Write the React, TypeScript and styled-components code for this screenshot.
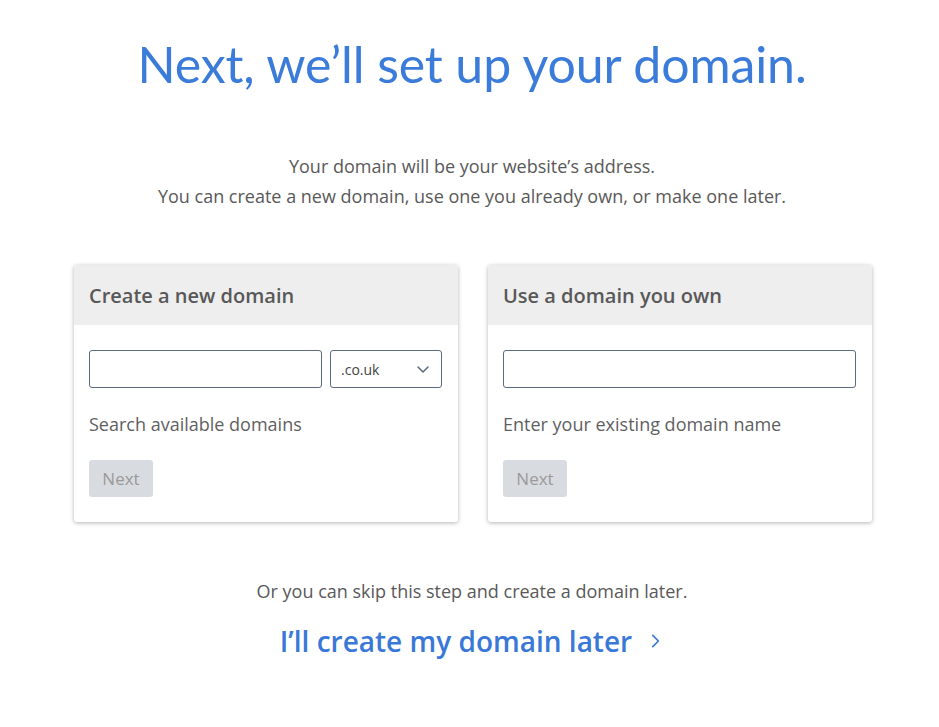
import React from "react"
import styled, { createGlobalStyle } from "styled-components"

const GlobalStyle = createGlobalStyle`
  html, body {
    margin: 0;
    padding: 0;
    background: #ffffff;
  }
  body {
    font-family: "Open Sans", "Liberation Sans", sans-serif;
    color: #555;
  }
`

const Page = styled.main`
  display: flex;
  flex-direction: column;
  align-items: center;
  padding: 34px 0 0 5px;
`

const Title = styled.h1`
  margin: 0;
  font-family: Lato, "Open Sans", sans-serif;
  font-weight: 400;
  font-size: 50px;
  line-height: 60px;
  color: #3b7bd9;
  letter-spacing: -0.1px;
`

const Intro = styled.p`
  margin: 57px 0 0;
  font-size: 18px;
  line-height: 30px;
  text-align: center;
  color: #595959;
`

const Cards = styled.div`
  display: grid;
  grid-template-columns: 384px 384px;
  gap: 30px;
  margin: 54px 0 0 2px;
`

const Card = styled.section`
  background: #fff;
  border-radius: 3px;
  box-shadow: 0 1px 4px rgba(0, 0, 0, 0.3);
  overflow: hidden;
`

const CardHeader = styled.h2`
  margin: 0;
  height: 60px;
  display: flex;
  align-items: center;
  padding: 0 15px;
  background: #eeeeee;
  font-size: 20px;
  font-weight: 600;
  color: #585858;
`

const CardBody = styled.div`
  padding: 25px 16px 25px 15px;
`

const InputRow = styled.div`
  display: flex;
  gap: 8px;
`

const TextInput = styled.input`
  flex: 1;
  min-width: 0;
  height: 38px;
  box-sizing: border-box;
  border: 1px solid #5d6b80;
  border-radius: 3px;
  padding: 0 10px;
  font: inherit;
  font-size: 15px;
`

const Select = styled.div`
  width: 112px;
  height: 38px;
  box-sizing: border-box;
  border: 1px solid #5d6b80;
  border-radius: 3px;
  padding: 0 10px;
  display: flex;
  align-items: center;
  justify-content: space-between;
  font-size: 14px;
  color: #444;
`

const Hint = styled.p`
  margin: 24px 0 0;
  font-size: 18px;
  line-height: 25px;
  color: #5f5f5f;
`

const NextButton = styled.button`
  margin-top: 23px;
  height: 37px;
  width: 64px;
  padding: 0;
  border: none;
  border-radius: 3px;
  background: #d8dbe0;
  color: #9a9a9a;
  font: inherit;
  font-size: 17px;
  cursor: default;
`

const SkipText = styled.p`
  margin: 57px 0 0;
  font-size: 18px;
  line-height: 24px;
  color: #595959;
`

const LaterLink = styled.a`
  margin-top: 19px;
  display: flex;
  align-items: center;
  gap: 14px;
  font-size: 28px;
  font-weight: 600;
  color: #3a78d8;
  text-decoration: none;
`

function Chevron({ size, color, dir }: { size: number; color: string; dir: "down" | "right" }) {
  const d = dir === "down" ? "M3 6l5 5 5-5" : "M6 3l5 5-5 5"
  return (
    <svg width={size} height={size} viewBox="0 0 16 16" fill="none" aria-hidden="true">
      <path d={d} stroke={color} strokeWidth={1.5} strokeLinecap="round" strokeLinejoin="round" />
    </svg>
  )
}

function DomainCard({ title, hint, children }: { title: string; hint: string; children: React.ReactNode }) {
  return (
    <Card>
      <CardHeader>{title}</CardHeader>
      <CardBody>
        <InputRow>{children}</InputRow>
        <Hint>{hint}</Hint>
        <NextButton disabled>Next</NextButton>
      </CardBody>
    </Card>
  )
}

export default function App() {
  return (
    <>
      <GlobalStyle />
      <Page>
        <Title>Next, we’ll set up your domain.</Title>
        <Intro>
          Your domain will be your website’s address.
          <br />
          You can create a new domain, use one you already own, or make one later.
        </Intro>

        <Cards>
          <DomainCard title="Create a new domain" hint="Search available domains">
            <TextInput aria-label="New domain" />
            <Select>
              .co.uk
              <Chevron size={16} color="#5d6b80" dir="down" />
            </Select>
          </DomainCard>
          <DomainCard title="Use a domain you own" hint="Enter your existing domain name">
            <TextInput aria-label="Existing domain" />
          </DomainCard>
        </Cards>

        <SkipText>Or you can skip this step and create a domain later.</SkipText>
        <LaterLink href="#">
          I’ll create my domain later
          <Chevron size={18} color="#3a78d8" dir="right" />
        </LaterLink>
      </Page>
    </>
  )
}
